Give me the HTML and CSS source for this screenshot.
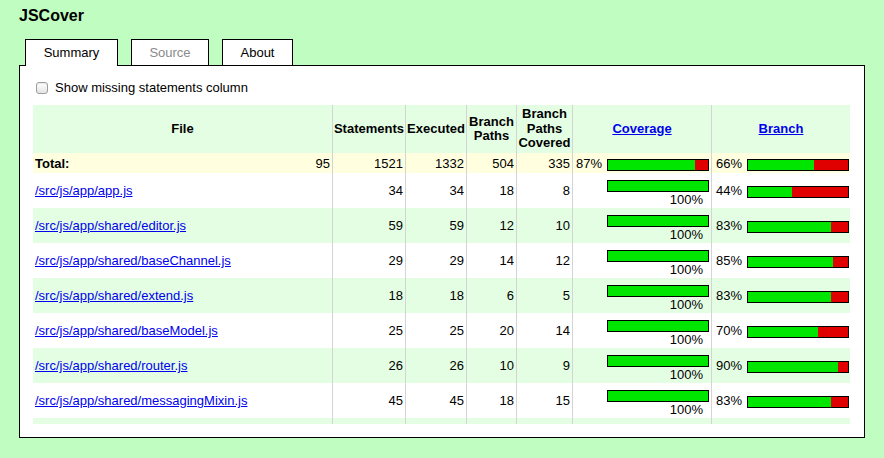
FILE: index.html
```html
<!DOCTYPE html>
<html>
<head>
<meta charset="utf-8">
<title>JSCover</title>
<link rel="stylesheet" href="styles.css">
</head>
<body>
<h1 class="title">JSCover</h1>
<div class="tabs">
  <div class="tab tab-summary active">Summary</div>
  <div class="tab tab-source disabled">Source</div>
  <div class="tab tab-about">About</div>
</div>
<div class="panel">
  <label class="opt"><input type="checkbox" class="cb">Show missing statements column</label>
  <div class="scroll">
    <table class="summary">
      <thead>
        <tr>
          <th class="c-file">File</th>
          <th class="c-st">Statements</th>
          <th class="c-ex">Executed</th>
          <th class="c-bp">Branch<br>Paths</th>
          <th class="c-bpc">Branch<br>Paths<br>Covered</th>
          <th class="c-cov"><a href="#">Coverage</a></th>
          <th class="c-br"><a href="#">Branch</a></th>
        </tr>
      </thead>
      <tbody>
        <tr class="total">
          <td><div class="tot"><b>Total:</b><span>95</span></div></td>
          <td class="num">1521</td>
          <td class="num">1332</td>
          <td class="num">504</td>
          <td class="num">335</td>
          <td class="pc cov"><div class="pcw"><span>87%</span><span class="bar"><span class="fill" style="width:87px"></span></span></div></td>
          <td class="pc br"><div class="pcw"><span>66%</span><span class="bar"><span class="fill" style="width:66px"></span></span></div></td>
        </tr>
        <tr>
          <td><a href="#">/src/js/app/app.js</a></td>
          <td class="num">34</td><td class="num">34</td><td class="num">18</td><td class="num">8</td>
          <td class="pc cov full"><span class="bar"><span class="fill" style="width:100px"></span></span><div class="p100">100%</div></td>
          <td class="pc br"><div class="pcw"><span>44%</span><span class="bar"><span class="fill" style="width:44px"></span></span></div></td>
        </tr>
        <tr class="alt">
          <td><a href="#">/src/js/app/shared/editor.js</a></td>
          <td class="num">59</td><td class="num">59</td><td class="num">12</td><td class="num">10</td>
          <td class="pc cov full"><span class="bar"><span class="fill" style="width:100px"></span></span><div class="p100">100%</div></td>
          <td class="pc br"><div class="pcw"><span>83%</span><span class="bar"><span class="fill" style="width:83px"></span></span></div></td>
        </tr>
        <tr>
          <td><a href="#">/src/js/app/shared/baseChannel.js</a></td>
          <td class="num">29</td><td class="num">29</td><td class="num">14</td><td class="num">12</td>
          <td class="pc cov full"><span class="bar"><span class="fill" style="width:100px"></span></span><div class="p100">100%</div></td>
          <td class="pc br"><div class="pcw"><span>85%</span><span class="bar"><span class="fill" style="width:85px"></span></span></div></td>
        </tr>
        <tr class="alt">
          <td><a href="#">/src/js/app/shared/extend.js</a></td>
          <td class="num">18</td><td class="num">18</td><td class="num">6</td><td class="num">5</td>
          <td class="pc cov full"><span class="bar"><span class="fill" style="width:100px"></span></span><div class="p100">100%</div></td>
          <td class="pc br"><div class="pcw"><span>83%</span><span class="bar"><span class="fill" style="width:83px"></span></span></div></td>
        </tr>
        <tr>
          <td><a href="#">/src/js/app/shared/baseModel.js</a></td>
          <td class="num">25</td><td class="num">25</td><td class="num">20</td><td class="num">14</td>
          <td class="pc cov full"><span class="bar"><span class="fill" style="width:100px"></span></span><div class="p100">100%</div></td>
          <td class="pc br"><div class="pcw"><span>70%</span><span class="bar"><span class="fill" style="width:70px"></span></span></div></td>
        </tr>
        <tr class="alt">
          <td><a href="#">/src/js/app/shared/router.js</a></td>
          <td class="num">26</td><td class="num">26</td><td class="num">10</td><td class="num">9</td>
          <td class="pc cov full"><span class="bar"><span class="fill" style="width:100px"></span></span><div class="p100">100%</div></td>
          <td class="pc br"><div class="pcw"><span>90%</span><span class="bar"><span class="fill" style="width:90px"></span></span></div></td>
        </tr>
        <tr>
          <td><a href="#">/src/js/app/shared/messagingMixin.js</a></td>
          <td class="num">45</td><td class="num">45</td><td class="num">18</td><td class="num">15</td>
          <td class="pc cov full"><span class="bar"><span class="fill" style="width:100px"></span></span><div class="p100">100%</div></td>
          <td class="pc br"><div class="pcw"><span>83%</span><span class="bar"><span class="fill" style="width:83px"></span></span></div></td>
        </tr>
        <tr class="alt">
          <td></td><td></td><td></td><td></td><td></td><td></td><td></td>
        </tr>
      </tbody>
    </table>
  </div>
</div>
</body>
</html>
```
FILE: styles.css
```css
html, body {
  margin: 0;
  padding: 0;
}
body {
  background: #c0fdc0;
  font-family: "Liberation Sans", Arial, Helvetica, sans-serif;
  font-size: 13px;
  color: #000;
  height: 458px;
  overflow: hidden;
}
a {
  color: #0000ee;
  text-decoration: underline;
}
.title {
  margin: 0;
  padding: 7px 0 0 19px;
  font-size: 16px;
  line-height: 18px;
  font-weight: bold;
}
.tabs {
  display: flex;
  align-items: flex-end;
  gap: 13px;
  margin: 14px 0 0 25px;
  height: 26px;
}
.tab {
  box-sizing: border-box;
  height: 26px;
  border: 1px solid #000;
  border-bottom: 0;
  background: #fff;
  text-align: center;
  line-height: 25px;
}
.tab.active {
  height: 27px;
  margin-bottom: -1px;
  position: relative;
  z-index: 1;
}
.tab.disabled {
  color: #8a8a8a;
}
.tab-summary { width: 93px; }
.tab-source { width: 78px; }
.tab-about { width: 71px; }

.panel {
  box-sizing: border-box;
  margin-left: 19px;
  width: 846px;
  height: 373px;
  border: 1px solid #000;
  background: #fff;
  padding: 14px 14px 13px 13px;
}
.opt {
  display: flex;
  align-items: center;
  height: 15px;
  line-height: 15px;
  margin: 0 0 10px 3px;
}
.cb {
  -webkit-appearance: none;
  appearance: none;
  box-sizing: border-box;
  width: 12px;
  height: 12px;
  margin: 0 7px 0 0;
  border: 1px solid #9d9d9d;
  border-radius: 3px;
  background: linear-gradient(#ffffff, #e4e4e4);
  box-shadow: inset 0 1px 1px rgba(0,0,0,0.08);
}
.scroll {
  height: 319px;
  overflow: hidden;
}
.summary {
  width: 817px;
  border-collapse: separate;
  border-spacing: 0;
  table-layout: fixed;
}
.summary th, .summary td {
  box-sizing: border-box;
  padding: 0 2px;
  line-height: 15px;
  vertical-align: middle;
}
.summary th + th, .summary td + td {
  border-left: 1px solid #d4d4d4;
}
.summary thead tr {
  height: 48px;
  background: #e4fee4;
}
.summary th {
  font-weight: bold;
  line-height: 14.5px;
  text-align: center;
  white-space: nowrap;
  padding: 0;
}
.c-file { width: 299px; }
.c-st { width: 73px; }
.c-ex { width: 61px; }
.c-bp { width: 50px; }
.c-bpc { width: 56px; }
.c-cov { width: 139px; }
.c-br { width: 139px; }

.summary tbody tr {
  height: 35px;
}
.summary tbody tr.total {
  height: 20px;
  background: #ffffe0;
}
.summary tbody tr.alt {
  background: #e4fee4;
}
.num {
  text-align: right;
}
.tot {
  display: flex;
  justify-content: space-between;
}
.pc.cov {
  padding: 0 2px 0 3px;
}
.pc.br {
  padding: 0 1px 0 4px;
}
.pcw {
  display: flex;
  justify-content: space-between;
  align-items: center;
}
.bar {
  display: block;
  width: 100px;
  height: 10px;
  border: 1px solid #000;
  background: #e00000;
  margin-top: 3px;
}
.fill {
  display: block;
  height: 10px;
  background: #00e600;
}
.pc.full {
  vertical-align: top;
  padding-top: 7px;
}
.pc.full .bar {
  margin: 0 0 0 auto;
}
.p100 {
  text-align: right;
  padding-right: 6px;
  line-height: 15px;
}
```
